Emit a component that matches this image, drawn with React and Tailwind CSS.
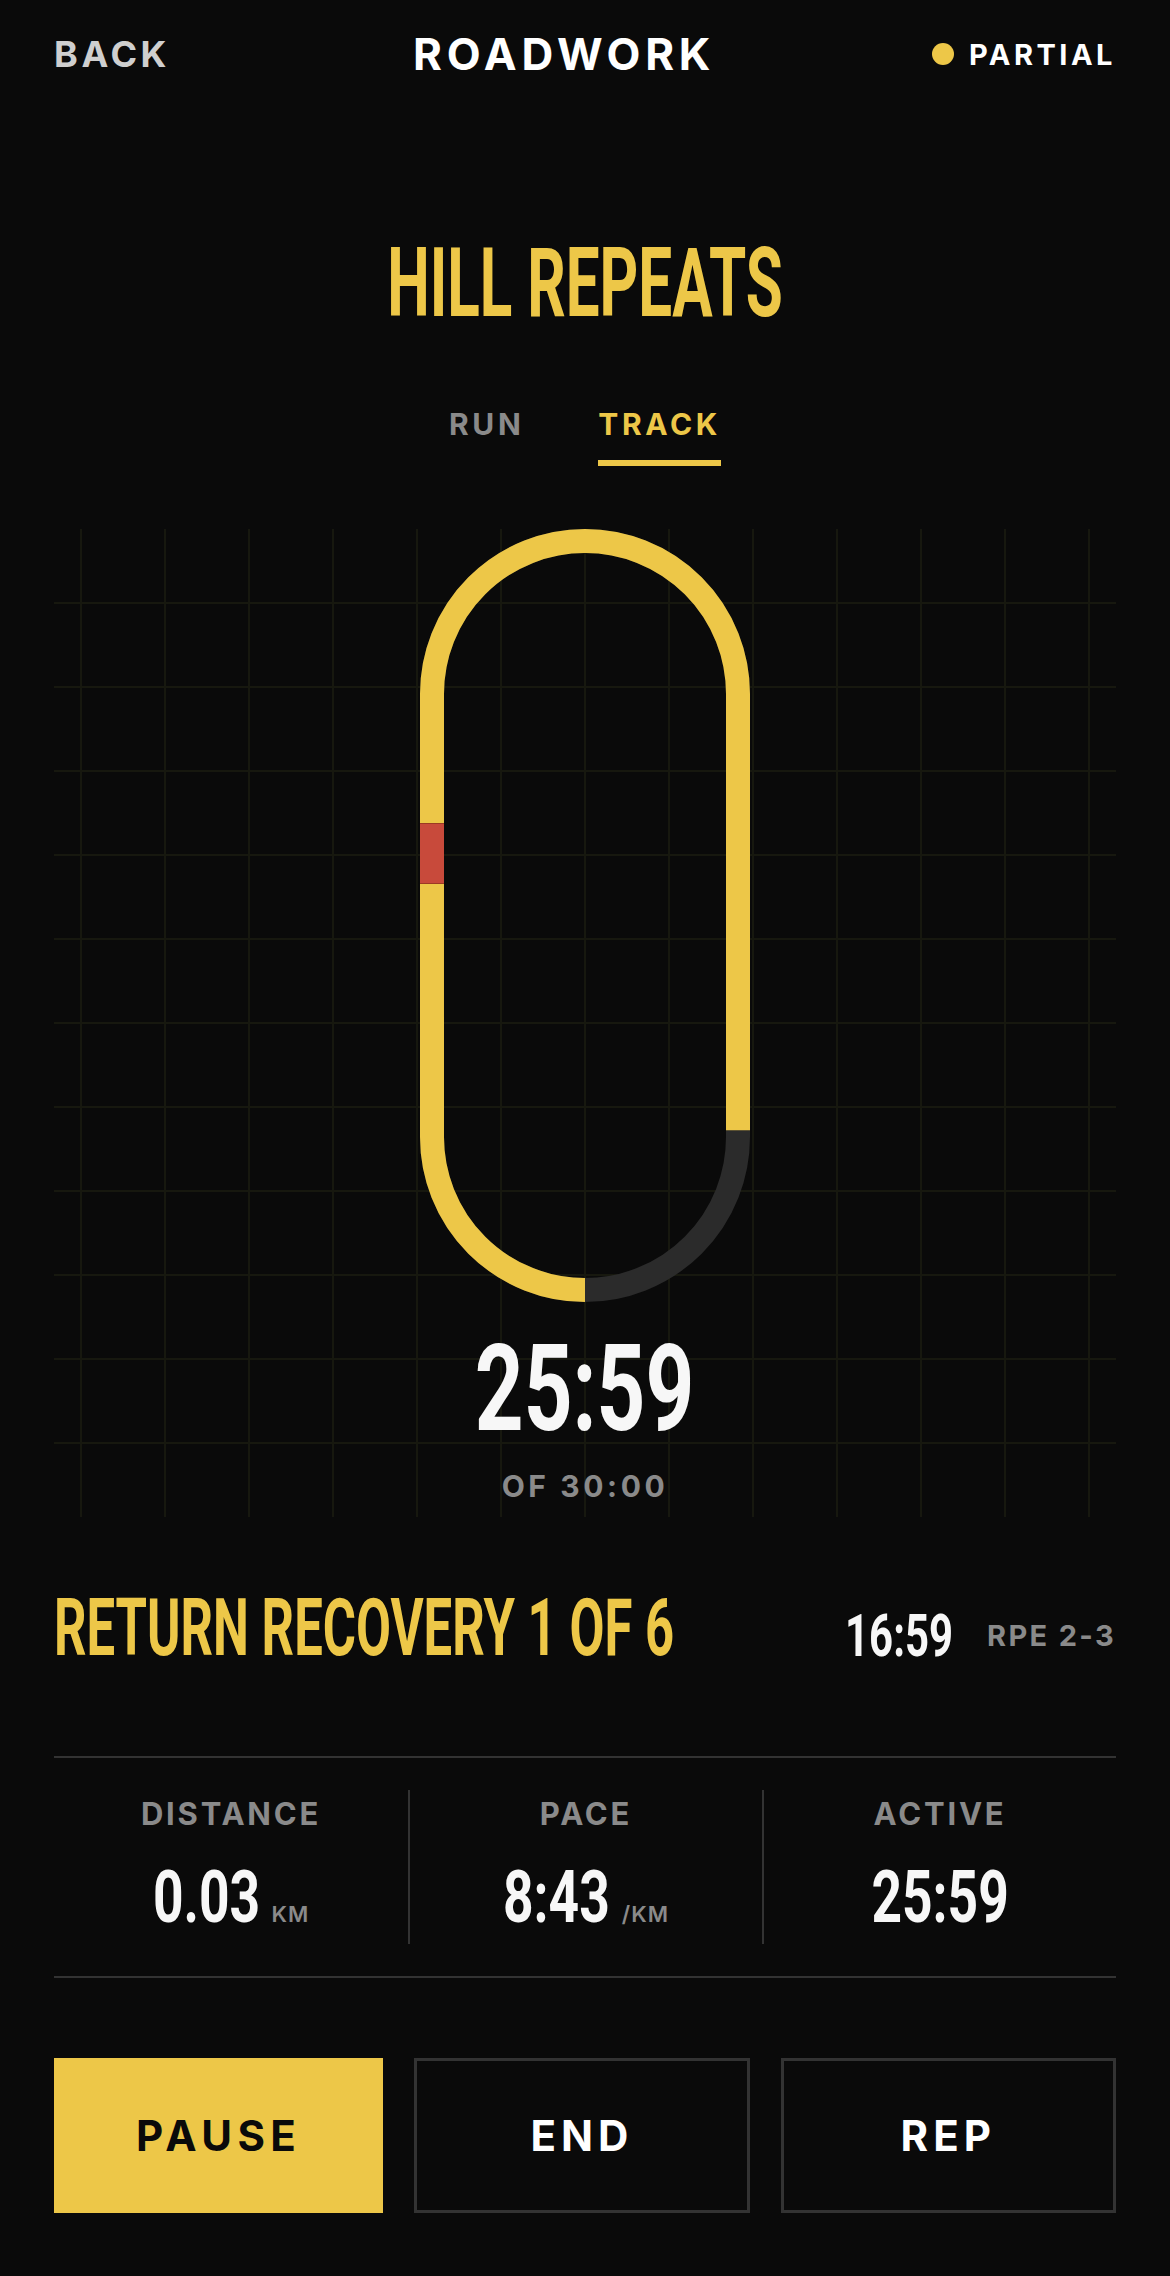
const COND = "font-['Roboto','Liberation_Sans',sans-serif] font-bold leading-none whitespace-nowrap";
const YELLOW = "text-[#edc748]";

// stadium track, path starts at bottom centre and runs clockwise
const TRACK_PATH = "M165 761 A153 153 0 0 1 12 608 L12 165 A153 153 0 0 1 318 165 L318 608 A153 153 0 0 1 165 761";
const TRACK_LEN = 2 * 443 + 2 * Math.PI * 153;

const elapsed = 25 * 60 + 59;
const total = 30 * 60;

function Track() {
    const done = TRACK_LEN * (elapsed / total);
    return (
        <svg width="330" height="773" viewBox="0 0 330 773" className="block shrink-0">
            <path d={TRACK_PATH} fill="none" stroke="#2b2b2b" strokeWidth="24" />
            <path d={TRACK_PATH} fill="none" stroke="#edc748" strokeWidth="24" strokeDasharray={`${done} ${TRACK_LEN}`} />
            <rect x="0" y="294" width="24" height="61" fill="#c84a3b" />
            <rect x="0" y="294" width="24" height="1" fill="#9c3a24" />
            <rect x="0" y="354" width="24" height="1" fill="#9c3a24" />
        </svg>
    );
}

function Stat({ label, value, unit, valueWidth, border }) {
    return (
        <div className={`flex h-[154px] flex-col items-center pt-[8px] ${border ? "border-l-2 border-[#333]" : ""}`}>
            <span className="text-[31px] leading-none font-bold tracking-[0.09em] text-[#8a8a8a]">{label}</span>
            <div className="mt-[32px] flex items-baseline">
                {unit ? (
                    <>
                        <span className="inline-block whitespace-nowrap" style={{ width: valueWidth }}>
                            <span className={`${COND} inline-block origin-left scale-x-[0.73] text-[73px] text-[#f7f7f7]`}>{value}</span>
                        </span>
                        <span className="ml-[16px] text-[22px] leading-none font-semibold tracking-[0.05em] text-[#8a8a8a]">{unit}</span>
                    </>
                ) : (
                    <span className={`${COND} inline-block origin-center scale-x-[0.73] text-[73px] text-[#f7f7f7]`}>{value}</span>
                )}
            </div>
        </div>
    );
}

export default function App() {
    return (
        <div className="min-h-[2276px] w-full bg-[#0a0a0a] px-[54px] font-['Inter','Liberation_Sans',sans-serif] text-white">
            {/* top bar */}
            <header className="flex h-[108px] items-center">
                <span className="text-[36px] leading-none font-bold tracking-[0.1em] text-[#cfcfcf]">BACK</span>
                <span className="ml-[243px] text-[44px] leading-none font-bold tracking-[0.11em] text-white">ROADWORK</span>
                <span className="ml-auto flex items-center gap-[15px]">
                    <span className="h-[22px] w-[22px] rounded-full bg-[#edc748]" />
                    <span className="text-[29px] leading-none font-bold tracking-[0.12em] text-white">PARTIAL</span>
                </span>
            </header>

            <h1 className={`${COND} ${YELLOW} mt-[127px] block origin-center scale-x-[0.62] text-center text-[97px]`}>HILL REPEATS</h1>

            <nav className="mt-[77px] flex justify-center gap-[74px] text-[30px] leading-none font-bold tracking-[0.12em]">
                <span className="border-b-[6px] border-transparent pb-[21px] text-[#8a8a8a]">RUN</span>
                <span className="border-b-[6px] border-[#edc748] pb-[21px] text-[#edc748]">TRACK</span>
            </nav>

            {/* track view */}
            <section className="mt-[63px] flex h-[988px] flex-col items-center bg-[linear-gradient(to_right,transparent_41px,#17180f_41px,#17180f_43px,transparent_43px),linear-gradient(to_bottom,transparent_41px,#17180f_41px,#17180f_43px,transparent_43px)] bg-[size:84px_84px] bg-center">
                <Track />
                <span className={`${COND} mt-[27px] block origin-center scale-x-[0.71] text-[120px] text-[#f7f7f7]`}>25:59</span>
                <span className="mt-[22px] text-[30px] leading-none font-bold tracking-[0.12em] text-[#8a8a8a]">OF 30:00</span>
            </section>

            {/* current segment */}
            <div className="mt-[71px] flex h-[80px] items-center justify-between">
                <span className={`${COND} ${YELLOW} block min-w-0 flex-1 origin-left scale-x-[0.635] text-[80px]`}>RETURN RECOVERY 1 OF 6</span>
                <div className="mt-[14px] flex items-center">
                    <span className={`${COND} inline-block origin-right scale-x-[0.71] text-[59px] text-[#f7f7f7]`}>16:59</span>
                    <span className="ml-[34px] text-[29px] leading-none font-bold tracking-[0.08em] text-[#8a8a8a]">RPE 2-3</span>
                </div>
            </div>

            <section className="mt-[88px] grid grid-cols-3 border-y-2 border-[#333] py-[32px]">
                <Stat label="DISTANCE" value="0.03" unit="KM" valueWidth={103} />
                <Stat label="PACE" value="8:43" unit="/KM" valueWidth={103} border />
                <Stat label="ACTIVE" value="25:59" border />
            </section>

            <div className="mt-[80px] flex gap-[31px]">
                <button className="flex h-[155px] flex-1 items-center justify-center bg-[#edc748] text-[42px] leading-none font-bold tracking-[0.13em] text-[#0a0a0a]">PAUSE</button>
                <button className="flex h-[155px] flex-1 items-center justify-center border-[3px] border-[#333] text-[42px] leading-none font-bold tracking-[0.12em] text-white">END</button>
                <button className="flex h-[155px] flex-1 items-center justify-center border-[3px] border-[#333] text-[42px] leading-none font-bold tracking-[0.12em] text-white">REP</button>
            </div>
        </div>
    );
}
